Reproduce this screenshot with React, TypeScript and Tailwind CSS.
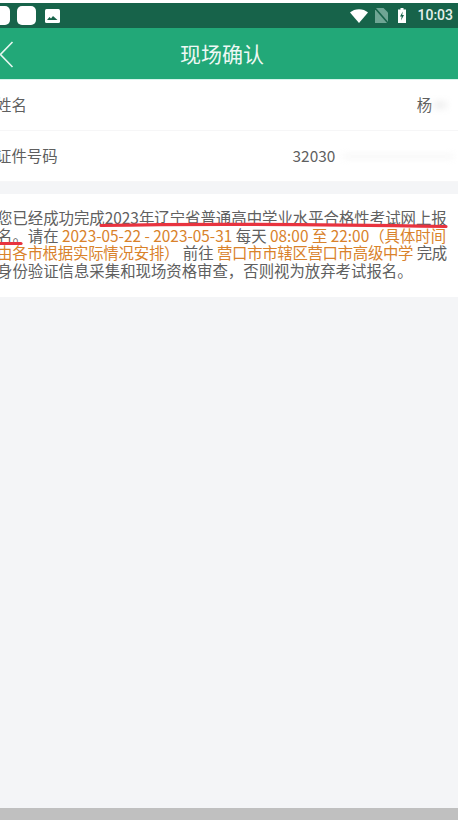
const cjk = { fontFamily: '"Noto Sans CJK SC", sans-serif' };

function StatusBar() {
  return (
    <div className="flex h-[25px] items-center bg-[#17634a] pr-[5px]">
      <div className="-ml-[9px] h-[19px] w-[19px] rounded-[5px] bg-white" />
      <div className="ml-[7px] h-[19px] w-[19px] rounded-[5px] bg-white" />
      <svg className="ml-[9px]" width="15" height="14" viewBox="0 0 15 14">
        <rect width="15" height="14" rx="1.5" fill="#fff" />
        <path d="M2 11l2.500-3 1.500 1.500 2-2.500 4.500 4z" fill="#17634a" />
      </svg>
      <div className="flex-1" />
      <svg width="18" height="14" viewBox="0 0 18 14">
        <path d="M0 3.500C4.500 -1 13.500 -1 18 3.500L9 14z" fill="#fff" />
      </svg>
      <svg className="ml-[7px]" width="13" height="15" viewBox="0 0 13 15">
        <path d="M0 0h8.500L13 4.500V15H0z" fill="#6fa594" />
        <path d="M0 0L13 15" stroke="#17634a" strokeWidth="1.500" />
      </svg>
      <svg className="ml-[10px]" width="8" height="15" viewBox="0 0 8 15">
        <path d="M2.500 0h3v1.500H8V15H0V1.500h2.500z" fill="#fff" />
        <path d="M4.800 3.500L2 8.500h1.700L3 12.500 6 7H4.200z" fill="#17634a" />
      </svg>
      <span className="ml-[11px] text-[14px] font-medium text-[#e4efeb]" style={{ fontFamily: "Roboto, sans-serif" }}>
        10:03
      </span>
    </div>
  );
}

function NavBar() {
  return (
    <div className="relative flex h-[52px] items-center justify-center border-b border-[#d6f5ec] bg-[#22a878] pr-[14px]">
      <svg className="absolute -left-[1px] top-[13px]" width="15" height="27" viewBox="0 0 15 27" fill="none">
        <path d="M13.500 1L1.500 13.500L13.500 26" stroke="#e6f6f0" strokeWidth="1.600" />
      </svg>
      <span className="text-[21px] text-[#eef8f4]" style={cjk}>现场确认</span>
    </div>
  );
}

function InfoRow({ label, value, valueClass, smudge }: { label: string; value: string; valueClass: string; smudge: string }) {
  return (
    <div className="flex h-[51px] items-center border-b border-[#f6f6f7] text-[15.4px] text-[#5f5f5f]">
      <span className="-ml-[4px]">{label}</span>
      <span className={valueClass}>{value}</span>
      <span className={smudge} />
    </div>
  );
}

export default function App() {
  return (
    <div className="flex h-[820px] w-[458px] flex-col overflow-hidden bg-white" style={cjk}>
      <div className="h-[3px] bg-white" />
      <StatusBar />
      <NavBar />
      <div className="bg-white">
        <InfoRow label="姓名" value="杨" valueClass="ml-[390px]" smudge="ml-px h-[8px] w-[14px] bg-[#f1f1f1] blur-[3px]" />
        <InfoRow label="证件号码" value="32030" valueClass="ml-[235px]" smudge="ml-2 h-[5px] w-[110px] bg-[#f7f7f7] blur-[3px]" />
      </div>
      <div className="h-[12px] bg-[#f4f5f7]" />
      <div className="relative h-[103px] bg-white pr-[7px] pt-[15px] text-[15.4px] leading-[17.7px] text-[#606060]">
        <p className="-ml-[3px]">
          您已经成功完成2023年辽宁省普通高中学业水平合格性考试网上报名。请在{" "}
          <span className="text-[#d9822b]">2023-05-22 - 2023-05-31</span> 每天{" "}
          <span className="text-[#d9822b]">08:00 至 22:00（具体时间</span>
          <span className="tracking-[-0.2px] text-[#d9822b]">由各市根据实际情况安排）</span> 前往{" "}
          <span className="tracking-[-0.3px] text-[#d9822b]">营口市市辖区营口市高级中学</span>{" "}
          <span className="tracking-[-0.3px]">完成</span>身份验证信息采集和现场资格审查，否则视为放弃考试报名。
        </p>
        <svg className="absolute left-0 top-[25px]" width="458" height="30" viewBox="0 0 458 30" fill="none">
          <path d="M101 6.500C200 4.500 330 5.500 446 7.500" stroke="#e8333f" strokeWidth="3.200" strokeLinecap="round" />
          <path d="M0 24.500L21 24.500" stroke="#e8333f" strokeWidth="3.200" strokeLinecap="round" />
        </svg>
      </div>
      <div className="flex-1 bg-[#f4f5f7]" />
      <div className="h-[12px] bg-[#c0c0c0]" />
    </div>
  );
}
